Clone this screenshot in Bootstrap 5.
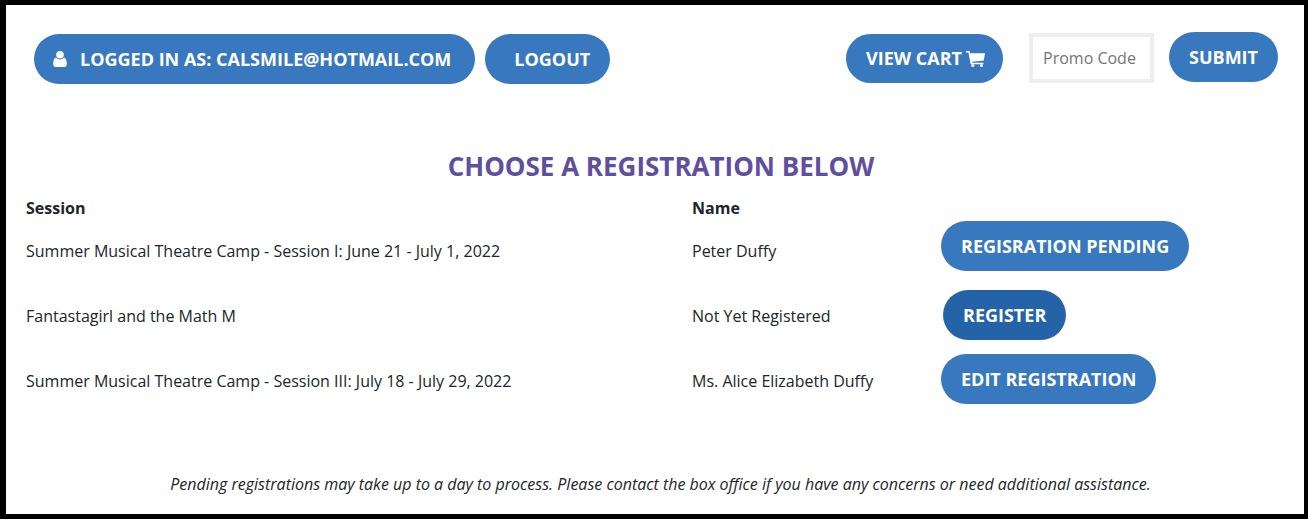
<!DOCTYPE html>
<html lang="en">
<head>
    <meta charset="UTF-8">
    <meta name="viewport" content="width=device-width, initial-scale=1.0">
    <link href="https://cdn.jsdelivr.net/npm/bootstrap@5.3.0/dist/css/bootstrap.min.css" rel="stylesheet">
    <script defer src="https://cdn.jsdelivr.net/npm/bootstrap@5.3.0/dist/js/bootstrap.bundle.min.js"></script>
    <title>Choose a Registration</title>
    <style>
        html, body { height: 520px; overflow: hidden; }
        body { font-family: "Open Sans", sans-serif; font-size: 16px; color: #212529; background: #fff; }
        .frame { height: 519px; border: solid #000; border-width: 5px 4px 5px 6px; }
        .top-bar { padding: 27px 26px 0 28px; height: 140px; }
        .pill {
            background: #3878bf; color: #fff; border: 0; border-radius: 25px; height: 50px;
            font-weight: 700; font-size: 18px; text-transform: uppercase; padding: 0 20px;
            display: inline-flex; align-items: center; white-space: nowrap;
        }
        .pill:hover { background: #2563a8; color: #fff; }
        .pill-dark { background: #2563a8; margin-left: 2px; margin-bottom: 2px; }
        .pill-row { padding-top: 2px; }
        .user-icon { width: 14px; height: 16px; margin-right: 13px; }
        .cart-icon { width: 19px; height: 16px; margin-left: 4px; }
        .login-pill { padding-left: 19px; padding-right: 24px; }
        .logout-pill { padding: 0 20px 0 29px; margin-left: 10px; }
        .cart-pill { padding-right: 18px; height: 49px; margin-top: 2px; }
        .promo {
            width: 125px; height: 50px; border: 4px solid #eee; padding: 0 10px;
            font-size: 16px; margin: 1px 15px 0 26px; color: #6c757d; outline: 0;
        }
        .promo::placeholder { color: #757575; }
        .left-group { padding-top: 2px; }
        .page-title { color: #5f4f9f; font-size: 26px; font-weight: 700; text-transform: uppercase; margin: 0; line-height: 36px; padding-left: 12px; padding-top: 3px; }
        .reg-list { padding-left: 20px; margin-top: 14px; }
        .reg-head { height: 20px; font-weight: 700; align-items: center; }
        .reg-row { align-items: center; height: 65px; }
        .pill-up-5 { margin-bottom: 10px; }
        .pill-up-2 { margin-bottom: 4px; }
        .col-session { width: 666px; flex: none; }
        .col-name { width: 249px; flex: none; }
        .note { font-style: italic; text-align: center; margin: 59px 0 0; padding-left: 11px; }
    </style>
</head>
<body class="m-0">
    <div class="frame">
        <div class="top-bar d-flex justify-content-between">
            <div class="left-group d-flex align-items-start">
                <a href="#" class="pill login-pill text-decoration-none">
                    <svg class="user-icon" viewBox="0 0 14 16" fill="#fff"><circle cx="7" cy="3.800" r="3.800"/><path d="M3 6.600C1 7.300.2 9.800.2 13c0 1.900 1 3 2.600 3h8.400c1.600 0 2.600-1.100 2.600-3 0-3.200-.8-5.700-2.800-6.400-1 1.200-2.400 1.900-4 1.900s-3-.7-4-1.900z"/></svg>
                    Logged in as: calsmile@hotmail.com
                </a>
                <a href="#" class="pill logout-pill text-decoration-none">Logout</a>
            </div>
            <div class="d-flex align-items-start">
                <a href="#" class="pill cart-pill text-decoration-none">View Cart
                    <svg class="cart-icon" viewBox="0 0 19 16" fill="#fff"><path d="M0 0h3.600l.5 2.200H19l-1.200 7.300-11.700 1.200.3 1.100h11v1.500H4.700L2.400 1.500H0z"/><circle cx="6.800" cy="14.500" r="1.500"/><circle cx="15.500" cy="14.500" r="1.500"/></svg>
                </a>
                <input type="text" class="promo" placeholder="Promo Code">
                <button type="button" class="pill">Submit</button>
            </div>
        </div>
        <h2 class="page-title text-center">Choose a registration below</h2>
        <div class="reg-list">
            <div class="reg-head d-flex">
                <div class="col-session">Session</div>
                <div class="col-name">Name</div>
            </div>
            <div class="reg-row d-flex">
                <div class="col-session">Summer Musical Theatre Camp - Session I: June 21 - July 1, 2022</div>
                <div class="col-name">Peter Duffy</div>
                <a href="#" class="pill pill-row pill-up-5 text-decoration-none">Regisration Pending</a>
            </div>
            <div class="reg-row d-flex">
                <div class="col-session">Fantastagirl and the Math M</div>
                <div class="col-name">Not Yet Registered</div>
                <a href="#" class="pill pill-row pill-dark text-decoration-none">Register</a>
            </div>
            <div class="reg-row d-flex">
                <div class="col-session">Summer Musical Theatre Camp - Session III: July 18 - July 29, 2022</div>
                <div class="col-name">Ms. Alice Elizabeth Duffy</div>
                <a href="#" class="pill pill-row pill-up-2 text-decoration-none">Edit Registration</a>
            </div>
        </div>
        <p class="note">Pending registrations may take up to a day to process. Please contact the box office if you have any concerns or need additional assistance.</p>
    </div>
</body>
</html>
